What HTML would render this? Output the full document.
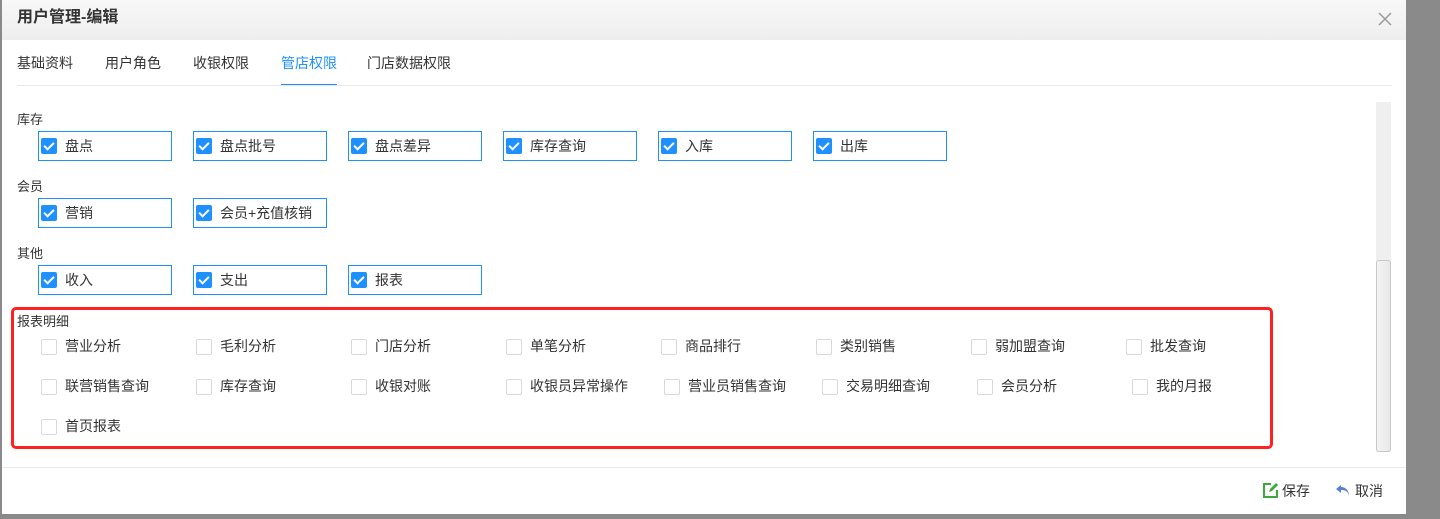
<!DOCTYPE html>
<html><head><meta charset="utf-8"><style>
*{margin:0;padding:0;box-sizing:border-box}
body{width:1440px;height:519px;background:#8a8a8a;position:relative;overflow:hidden;font-family:"Liberation Sans","Noto Sans CJK SC",sans-serif;font-size:14px;color:#333;line-height:16px}
.dlg{position:absolute;left:2px;top:0;width:1404px;height:514px;background:#fff}
.hd{position:absolute;left:0;top:0;width:100%;height:40px;background:linear-gradient(#f8f8f8,#eeeeee)}
.hd .t{position:absolute;left:15px;top:10px;font-size:16px;font-weight:bold;color:#333}
.x{position:absolute;left:1373px;top:9px;width:20px;height:20px}
.tab{position:absolute;top:55px;font-size:14px;color:#333}
.tab.a{color:#1e90ff}
.a:after{content:"";position:absolute;left:0;right:0;top:29px;height:2px;background:#1e90ff}
.ln{position:absolute;left:15px;width:1375px;top:85px;height:1px;background:#e8e8e8}
.lbl{position:absolute;left:15px;font-size:13px}
.cb{position:absolute;width:134px;height:30px;border:1px solid #1e90ff}
.cb i{position:absolute;left:2px;top:6px;width:16px;height:16px;background:#1e90ff;border-radius:2px}
.cb i:after{content:"";position:absolute;left:5px;top:2px;width:4px;height:8px;border:solid #fff;border-width:0 2px 2px 0;transform:rotate(45deg)}
.cb span{position:absolute;left:26px;top:6px}
.u{position:absolute;width:16px;height:16px;border:1px solid #d9d9d9;border-radius:2px}
.ut{position:absolute}
.red{position:absolute;left:9px;top:307px;width:1262px;height:142px;border:3px solid #ff2020;border-radius:5px}
.sb{position:absolute;left:1374px;top:102px;width:15px;height:350px;background:#efefef}
.th{position:absolute;left:1374px;top:260px;width:15px;height:192px;background:linear-gradient(90deg,#f4f4f4,#e8e8e8);border:1px solid #c8c8c8;border-radius:3px}
.fl{position:absolute;left:0;top:467px;width:100%;height:1px;background:#e8e8e8}
</style></head><body>
<div class="dlg">
<div class="hd"><div class="t">用户管理-编辑</div><svg class="x" viewBox="0 0 20 20"><path d="M4 4L16 16M16 4L4 16" stroke="#9a9a9a" stroke-width="1.5"/></svg></div>
<div class="tab" style="left:15px">基础资料</div>
<div class="tab" style="left:103px">用户角色</div>
<div class="tab" style="left:191px">收银权限</div>
<div class="tab a" style="left:279px">管店权限</div>
<div class="tab" style="left:365px">门店数据权限</div>
<div class="ln"></div>

<div class="lbl" style="top:112px">库存</div>
<div class="cb" style="left:36px;top:131px"><i></i><span>盘点</span></div>
<div class="cb" style="left:191px;top:131px"><i></i><span>盘点批号</span></div>
<div class="cb" style="left:346px;top:131px"><i></i><span>盘点差异</span></div>
<div class="cb" style="left:501px;top:131px"><i></i><span>库存查询</span></div>
<div class="cb" style="left:656px;top:131px"><i></i><span>入库</span></div>
<div class="cb" style="left:811px;top:131px"><i></i><span>出库</span></div>

<div class="lbl" style="top:179px">会员</div>
<div class="cb" style="left:36px;top:198px"><i></i><span>营销</span></div>
<div class="cb" style="left:191px;top:198px"><i></i><span>会员+充值核销</span></div>

<div class="lbl" style="top:246px">其他</div>
<div class="cb" style="left:36px;top:265px"><i></i><span>收入</span></div>
<div class="cb" style="left:191px;top:265px"><i></i><span>支出</span></div>
<div class="cb" style="left:346px;top:265px"><i></i><span>报表</span></div>

<div class="red"></div>
<div class="lbl" style="top:314px">报表明细</div>

<div class="u" style="left:39px;top:339px"></div><div class="ut" style="left:63px;top:338px">营业分析</div>
<div class="u" style="left:194px;top:339px"></div><div class="ut" style="left:218px;top:338px">毛利分析</div>
<div class="u" style="left:349px;top:339px"></div><div class="ut" style="left:373px;top:338px">门店分析</div>
<div class="u" style="left:504px;top:339px"></div><div class="ut" style="left:528px;top:338px">单笔分析</div>
<div class="u" style="left:659px;top:339px"></div><div class="ut" style="left:683px;top:338px">商品排行</div>
<div class="u" style="left:814px;top:339px"></div><div class="ut" style="left:838px;top:338px">类别销售</div>
<div class="u" style="left:969px;top:339px"></div><div class="ut" style="left:993px;top:338px">弱加盟查询</div>
<div class="u" style="left:1124px;top:339px"></div><div class="ut" style="left:1148px;top:338px">批发查询</div>

<div class="u" style="left:39px;top:379px"></div><div class="ut" style="left:63px;top:378px">联营销售查询</div>
<div class="u" style="left:194px;top:379px"></div><div class="ut" style="left:218px;top:378px">库存查询</div>
<div class="u" style="left:349px;top:379px"></div><div class="ut" style="left:373px;top:378px">收银对账</div>
<div class="u" style="left:504px;top:379px"></div><div class="ut" style="left:528px;top:378px">收银员异常操作</div>
<div class="u" style="left:662px;top:379px"></div><div class="ut" style="left:686px;top:378px">营业员销售查询</div>
<div class="u" style="left:820px;top:379px"></div><div class="ut" style="left:844px;top:378px">交易明细查询</div>
<div class="u" style="left:975px;top:379px"></div><div class="ut" style="left:999px;top:378px">会员分析</div>
<div class="u" style="left:1130px;top:379px"></div><div class="ut" style="left:1154px;top:378px">我的月报</div>

<div class="u" style="left:39px;top:419px"></div><div class="ut" style="left:63px;top:418px">首页报表</div>

<div class="sb"></div><div class="th"></div>
<div class="fl"></div>

<svg style="position:absolute;left:1260px;top:482px" width="17" height="17" viewBox="0 0 17 17"><path d="M9 2H2v13h13V8" fill="none" stroke="#3aaa3a" stroke-width="2"/><path d="M7 10l1-3 6-6 2 2-6 6z" fill="#3aaa3a"/></svg>
<div class="ut" style="left:1280px;top:483px;font-size:14px">保存</div>
<svg style="position:absolute;left:1333px;top:484px" width="16" height="14" viewBox="0 0 16 14"><path d="M6 1L1 5l5 4V6c4 0 7 1 8 6 0-5-3-9-8-9z" fill="#5b7fd6"/></svg>
<div class="ut" style="left:1353px;top:483px;font-size:14px">取消</div>
</div>
</body></html>
